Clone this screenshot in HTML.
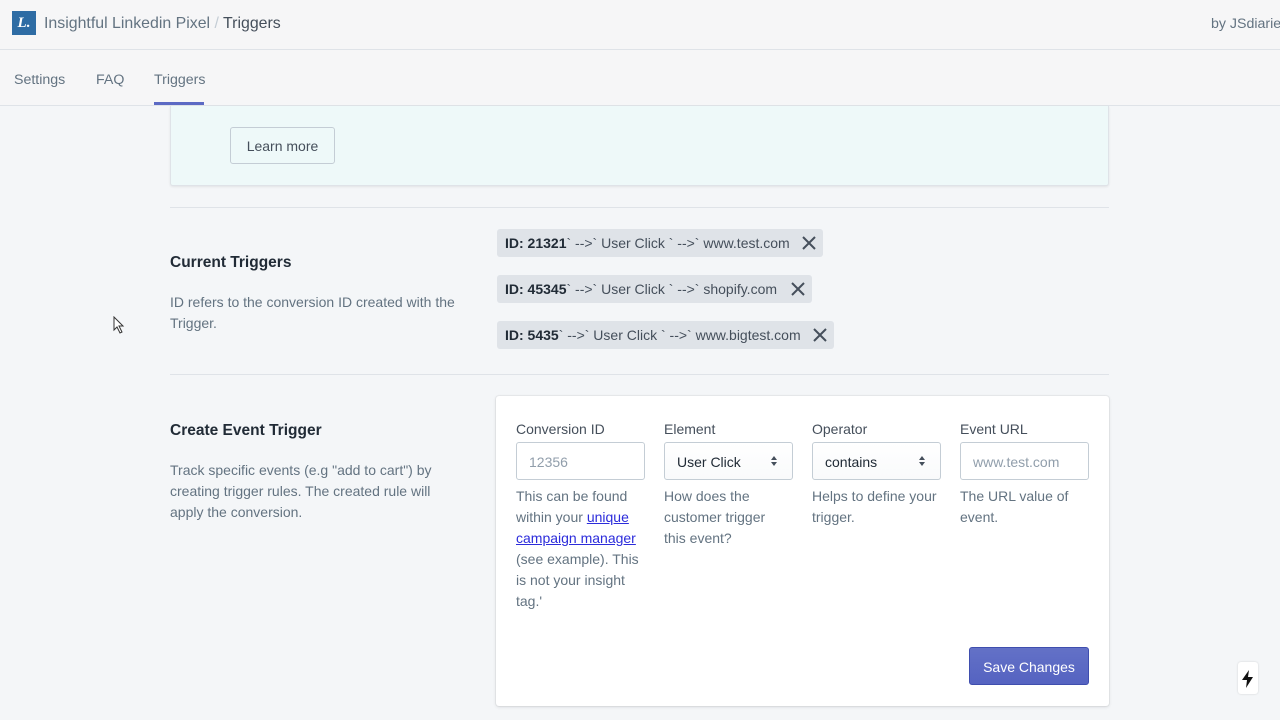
<!DOCTYPE html>
<html><head><style>
*{box-sizing:border-box;margin:0;padding:0}
body{width:1280px;height:720px;overflow:hidden;background:#f4f6f8;font-family:"Liberation Sans",sans-serif;color:#212b36;position:relative;font-size:14px}
.a{position:absolute}
.hdr{left:0;top:0;width:1280px;height:50px;background:#f6f6f7;border-bottom:1px solid #dfe3e8}
.tabs{left:0;top:50px;width:1280px;height:56px;background:#f6f6f7;border-bottom:1px solid #dfe3e8}
.tab{top:72px;font-size:14.2px;color:#637381}
.muted{color:#637381;font-size:14px;line-height:21px}
.tag{height:28px;background:#dfe3e8;border-radius:3px;font-size:14px;line-height:29px;padding-left:8px;color:#454f5b;white-space:nowrap}
.tag b{color:#212b36}
.tag .x{position:absolute;right:7px;top:7px}
.lbl{top:421px;font-size:14px;color:#454f5b}
.inp{top:442px;width:129px;height:38px;border:1px solid #c4cdd5;border-radius:3px;background:#fff;font-size:14px;line-height:38px;padding-left:12px}
.sel{background:linear-gradient(#fff,#f9fafb);color:#212b36}
.help{top:486px;width:128px;color:#637381;font-size:14px;line-height:21px}
</style></head><body>
<div class="a hdr"></div>
<div class="a" style="left:12px;top:11px;width:24px;height:24px;background:#2e6ca4;color:#fff;font:italic bold 15px 'Liberation Serif',serif;text-align:center;line-height:24px">L.</div>
<div class="a" style="left:44px;top:15px;font-size:15.9px;color:#637381">Insightful Linkedin Pixel <span style="color:#c4cdd5">/</span> <span style="color:#454f5b">Triggers</span></div>
<div class="a" style="left:1211px;top:16px;font-size:14.2px;color:#637381;white-space:nowrap">by JSdiaries</div>
<div class="a tabs"></div>
<div class="a tab" style="left:14px">Settings</div>
<div class="a tab" style="left:96px">FAQ</div>
<div class="a tab" style="left:154px">Triggers</div>
<div class="a" style="left:154px;top:102px;width:50px;height:3px;background:#5c6ac4"></div>

<div class="a" style="left:170px;top:106px;width:939px;height:80px;background:#eef9f9;border:1px solid #dfe3e8;border-top:none;border-radius:0 0 3px 3px;box-shadow:0 1px 2px rgba(0,0,0,.08)"></div>
<div class="a" style="left:230px;top:127px;width:105px;height:37px;border:1px solid #c4cdd5;border-radius:3px;font-size:14px;line-height:37px;text-align:center;color:#454f5b">Learn more</div>

<div class="a" style="left:170px;top:207px;width:939px;height:1px;background:#dfe3e8"></div>
<div class="a" style="left:170px;top:254px;font-size:15.5px;font-weight:bold;color:#212b36">Current Triggers</div>
<div class="a muted" style="left:170px;top:292px;width:300px">ID refers to the conversion ID created with the Trigger.</div>

<div class="a tag" style="left:497px;top:229px;width:326px"><b>ID: 21321</b>` --&gt;` User Click ` --&gt;` www.test.com<svg class="x" width="14" height="14" viewBox="0 0 14 14"><path d="M1 1L13 13M13 1L1 13" stroke="#454f5b" stroke-width="2"/></svg></div>
<div class="a tag" style="left:497px;top:275px;width:315px"><b>ID: 45345</b>` --&gt;` User Click ` --&gt;` shopify.com<svg class="x" width="14" height="14" viewBox="0 0 14 14"><path d="M1 1L13 13M13 1L1 13" stroke="#454f5b" stroke-width="2"/></svg></div>
<div class="a tag" style="left:497px;top:321px;width:337px"><b>ID: 5435</b>` --&gt;` User Click ` --&gt;` www.bigtest.com<svg class="x" width="14" height="14" viewBox="0 0 14 14"><path d="M1 1L13 13M13 1L1 13" stroke="#454f5b" stroke-width="2"/></svg></div>

<div class="a" style="left:170px;top:374px;width:939px;height:1px;background:#dfe3e8"></div>
<div class="a" style="left:170px;top:422px;font-size:15.5px;font-weight:bold;color:#212b36">Create Event Trigger</div>
<div class="a muted" style="left:170px;top:460px;width:290px">Track specific events (e.g "add to cart") by creating trigger rules. The created rule will apply the conversion.</div>

<div class="a" style="left:496px;top:396px;width:613px;height:310px;background:#fff;border-radius:3px;box-shadow:0 0 0 1px rgba(63,63,68,.05),0 1px 3px rgba(63,63,68,.15)"></div>
<div class="a lbl" style="left:516px">Conversion ID</div>
<div class="a lbl" style="left:664px">Element</div>
<div class="a lbl" style="left:812px">Operator</div>
<div class="a lbl" style="left:960px">Event URL</div>
<div class="a inp" style="left:516px;color:#919eab">12356</div>
<div class="a inp sel" style="left:664px">User Click</div>
<div class="a inp sel" style="left:812px">contains</div>
<div class="a inp" style="left:960px;color:#919eab">www.test.com</div>
<svg class="a" style="left:770px;top:455px" width="8" height="12" viewBox="0 0 8 12"><path d="M1 5L4 1L7 5ZM1 7L4 11L7 7Z" fill="#454f5b"/></svg>
<svg class="a" style="left:918px;top:455px" width="8" height="12" viewBox="0 0 8 12"><path d="M1 5L4 1L7 5ZM1 7L4 11L7 7Z" fill="#454f5b"/></svg>
<div class="a help" style="left:516px">This can be found within your <a style="color:#2c2cdb;text-decoration:underline">unique campaign manager</a> (see example). This is not your insight tag.'</div>
<div class="a help" style="left:664px;width:112px">How does the customer trigger this event?</div>
<div class="a help" style="left:812px;width:132px">Helps to define your trigger.</div>
<div class="a help" style="left:960px">The URL value of event.</div>
<div class="a" style="left:969px;top:647px;width:120px;height:38px;background:linear-gradient(#6371c7,#5563c1);border:1px solid #3f4eae;border-radius:3px;color:#fff;font-size:14px;line-height:38px;text-align:center">Save Changes</div>

<div class="a" style="left:1238px;top:662px;width:20px;height:32px;background:#fff;border-radius:3px;box-shadow:0 0 2px rgba(0,0,0,.15)"></div>
<svg class="a" style="left:1241px;top:670px" width="14" height="18" viewBox="0 0 14 18"><path d="M8 0L1 10H6L5 18L12 7H7Z" fill="#111"/></svg>
<svg class="a" style="left:113px;top:316px" width="12" height="18" viewBox="0 0 12 18"><path d="M1 1V14L4 11L7 17L9 16L6 10H10Z" fill="#fff" stroke="#333" stroke-width="1"/></svg>
</body></html>
